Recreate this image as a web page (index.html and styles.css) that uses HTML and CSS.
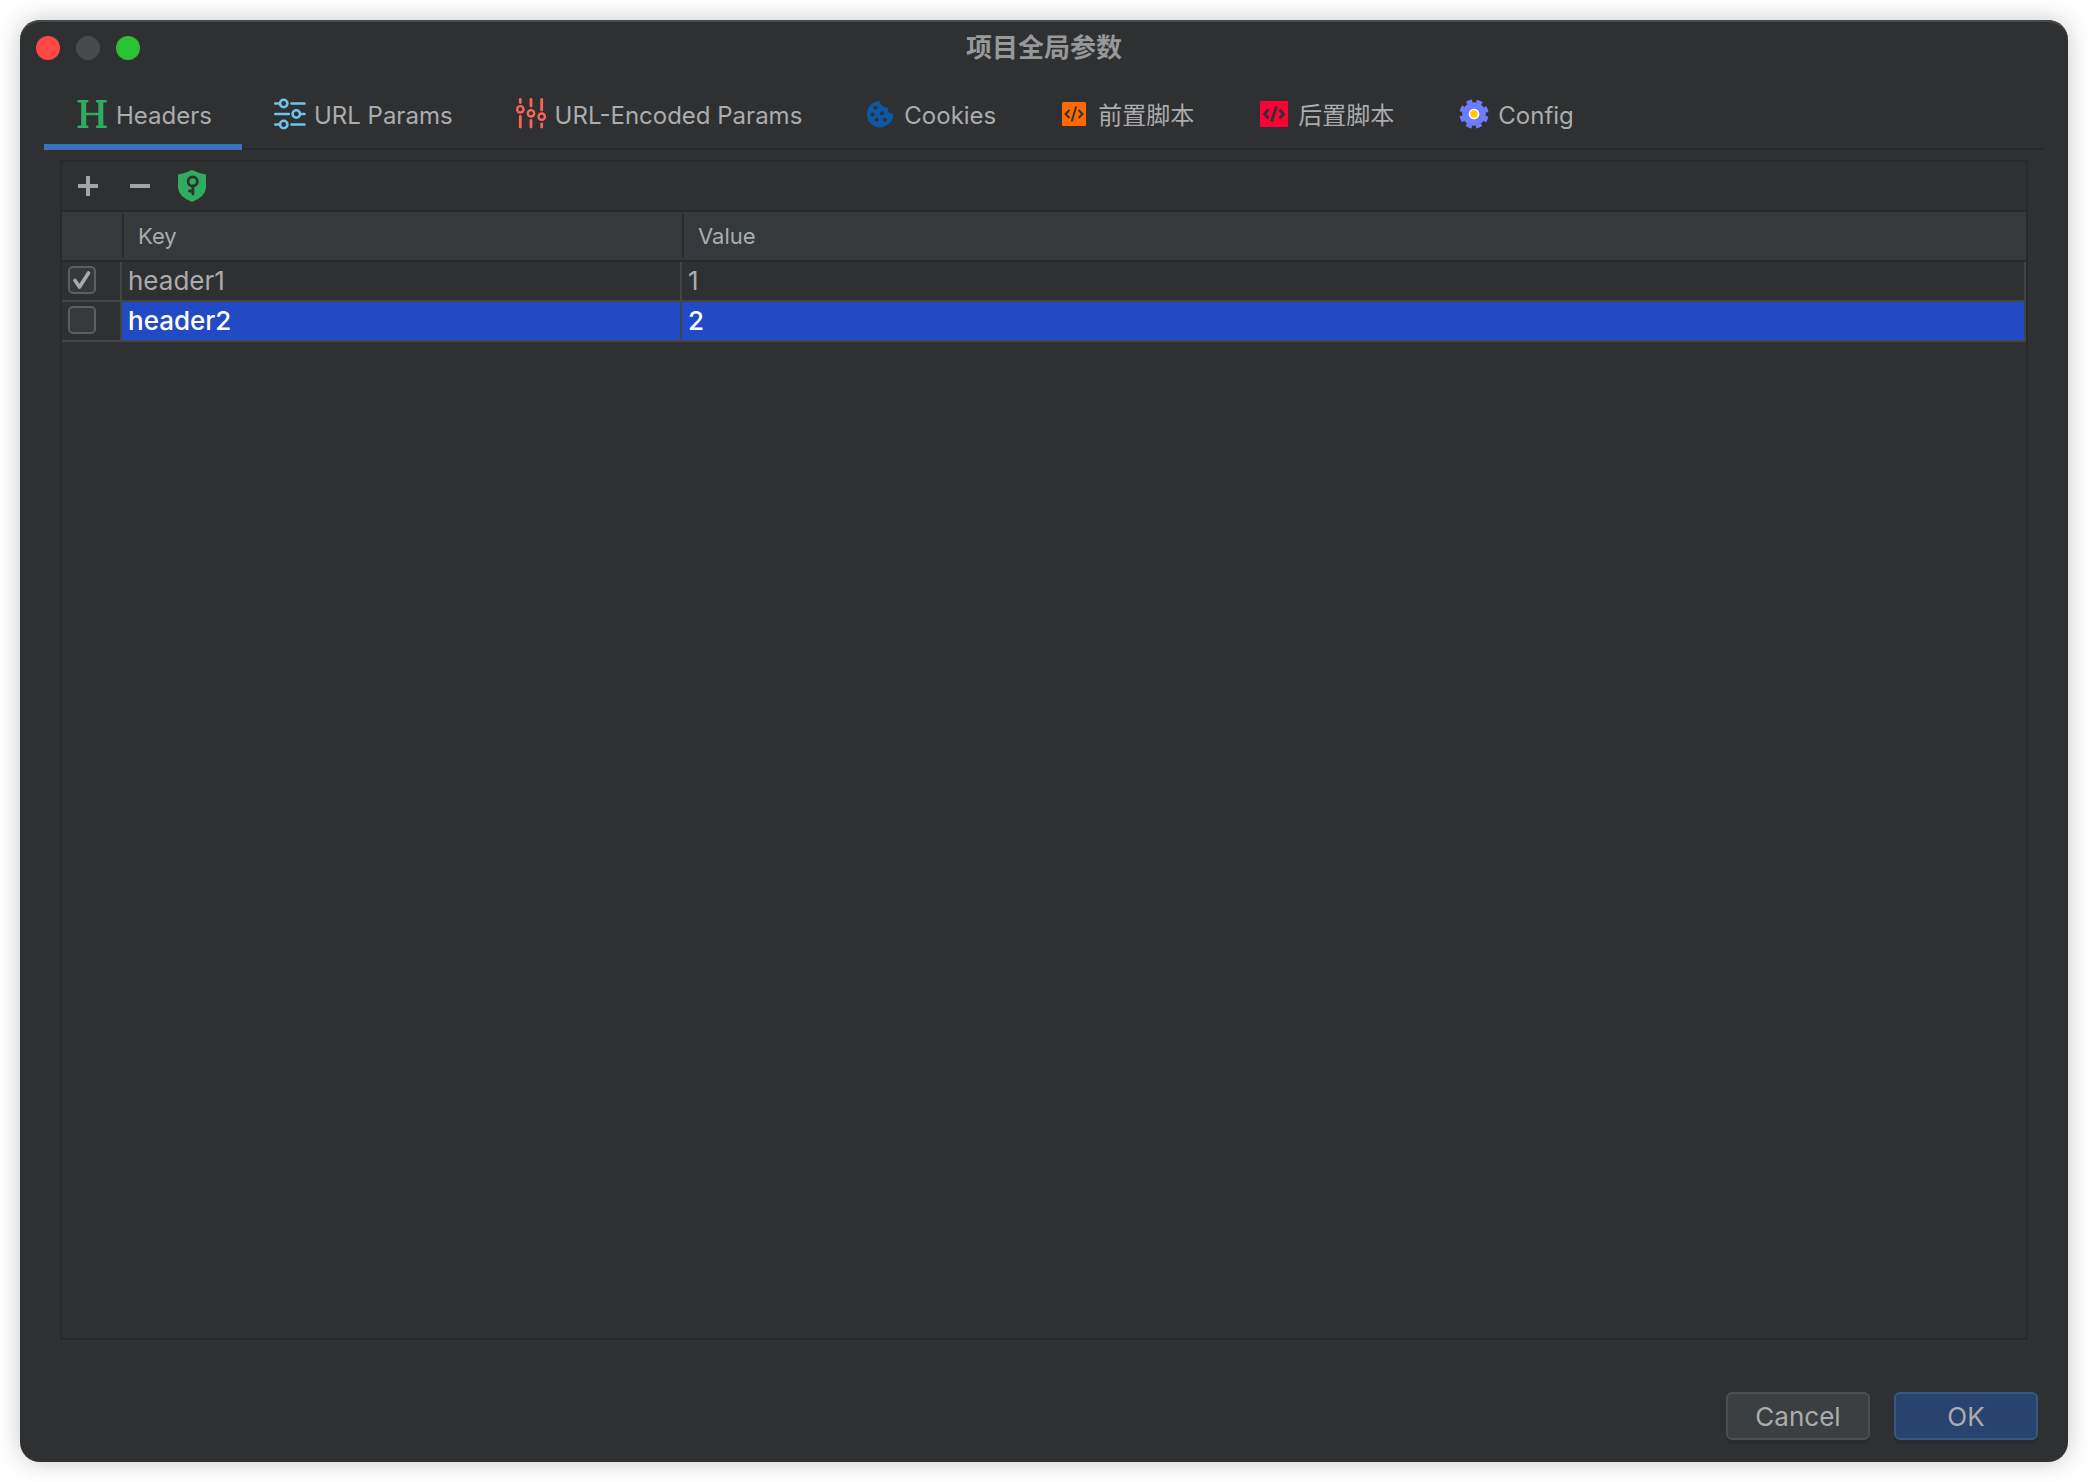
FILE: index.html
```html
<!DOCTYPE html>
<html lang="zh">
<head>
  <meta charset="UTF-8" />
  <meta name="viewport" content="width=device-width, initial-scale=1.0"/>
  <title>项目全局参数</title>
  <link rel="stylesheet" href="styles.css">
</head>
<body>

  <main class="window">
    <header class="titlebar">
      <div class="lights">
        <button type="button" class="light close" aria-label="Close"></button>
        <button type="button" class="light minimize" aria-label="Minimize" disabled></button>
        <button type="button" class="light zoom" aria-label="Zoom"></button>
      </div>
      <h1>项目全局参数</h1>
    </header>

    <nav class="tabs" role="tablist">
      <button type="button" class="tab active" role="tab" aria-selected="true">
        <svg class="icon" viewBox="0 0 32 32" fill="none" stroke="#2fac5f" stroke-linecap="round">
          <path d="M7.700 3v26M24.800 3v26" stroke-width="5" stroke-linecap="butt"/>
          <path d="M2.500 3.300h8.800M21 3.300h8.800M2.500 28.700h8.800M21 28.700h8.800M8 16h17" stroke-width="2.400"/>
        </svg>
        <span>Headers</span>
      </button>
      <button type="button" class="tab" role="tab">
        <svg class="icon" viewBox="0 0 32 32" fill="none" stroke="#6fc3ea" stroke-width="2.600" stroke-linecap="round">
          <path d="M1.300 5.500h4M17.500 5.500h13M1.300 16h13.500M27.500 16h3M1.300 26.500h4M17.500 26.500h13"/>
          <circle cx="9.700" cy="5.500" r="3.700"/>
          <circle cx="22.300" cy="16" r="3.700"/>
          <circle cx="9.700" cy="26.500" r="3.700"/>
        </svg>
        <span>URL Params</span>
      </button>
      <button type="button" class="tab" role="tab">
        <svg class="icon" viewBox="0 0 32 32" fill="none" stroke="#f9655b" stroke-width="2.800" stroke-linecap="round">
          <path d="M5.300 1.500v3M5.300 18.500v10.500M16 1.500v6.500M16 22.500v6.500M26.700 1.500v10.500M26.700 26v3"/>
          <circle cx="5.300" cy="11.300" r="3.200" stroke-width="2.400"/>
          <circle cx="16" cy="15.300" r="3.200" stroke-width="2.400"/>
          <circle cx="26.700" cy="18.700" r="3.200" stroke-width="2.400"/>
        </svg>
        <span>URL-Encoded Params</span>
      </button>
      <button type="button" class="tab" role="tab">
        <svg class="icon" viewBox="0 0 32 32">
          <path d="M16 3A13.200 13.200 0 1 0 29.200 15.500Q26.500 16 24.500 14Q23.500 12 24 9.500Q21.500 10 19 8.500Q16 6.500 16 3z" fill="#0e57a6"/>
          <g fill="#2f3032">
            <circle cx="11.500" cy="9.700" r="2"/>
            <circle cx="8.500" cy="16.500" r="2"/>
            <circle cx="18" cy="15.200" r="2"/>
            <circle cx="12.800" cy="21.700" r="2"/>
            <circle cx="21" cy="21.700" r="2"/>
          </g>
        </svg>
        <span>Cookies</span>
      </button>
      <button type="button" class="tab script" role="tab">
        <svg class="icon" viewBox="0 0 32 32">
          <rect x="4" y="4" width="24" height="24" rx="1.500" fill="#ff6a00"/>
          <path d="M11.500 12l-4 4 4 4M20.500 12l4 4-4 4M18.200 8.500l-4.500 15" fill="none" stroke="#2f3032" stroke-width="2"/>
        </svg>
        <span>前置脚本</span>
      </button>
      <button type="button" class="tab script" role="tab">
        <svg class="icon" viewBox="0 0 32 32">
          <rect x="2" y="3" width="28" height="26" rx="1" fill="#ff0036"/>
          <path d="M10.500 11.500l-4 4.500 4 4.500M21.500 11.500l4 4.500-4 4.500M18.500 8.500l-5 15" fill="none" stroke="#2f3032" stroke-width="2.800"/>
        </svg>
        <span>后置脚本</span>
      </button>
      <button type="button" class="tab" role="tab">
        <svg class="icon" viewBox="0 0 32 32">
          <circle cx="16" cy="16" r="11.800" fill="#6f7cff"/>
          <circle cx="16" cy="16" r="13" fill="none" stroke="#6f7cff" stroke-width="3.200" stroke-dasharray="5.800 4.410" stroke-dashoffset="-2.200"/>
          <circle cx="16" cy="16" r="5.300" fill="#fff"/>
          <circle cx="16" cy="16" r="3.800" fill="#ffcb00"/>
        </svg>
        <span>Config</span>
      </button>
    </nav>

    <section class="panel">
      <div class="toolbar">
        <button type="button" class="tool" aria-label="Add">
          <svg class="icon" viewBox="0 0 32 32"><path d="M16 6v20M6 16h20" stroke="#a3a4a6" stroke-width="4"/></svg>
        </button>
        <button type="button" class="tool" aria-label="Remove">
          <svg class="icon" viewBox="0 0 32 32"><path d="M6 16h20" stroke="#a3a4a6" stroke-width="4"/></svg>
        </button>
        <button type="button" class="tool" aria-label="Authorization">
          <svg class="icon" viewBox="0 0 32 32">
            <path d="M16 0Q22 3 30 4.500V18Q29 27 16 32Q3 27 2 18V4.500Q10 3 16 0z" fill="#2fac5f"/>
            <circle cx="16.700" cy="11.500" r="4.600" fill="none" stroke="#2f3032" stroke-width="2.800"/>
            <path d="M16.900 16v8M16.500 21h-3" fill="none" stroke="#2f3032" stroke-width="2.800" stroke-linecap="round"/>
          </svg>
        </button>
      </div>

      <table class="params">
        <thead>
          <tr>
            <th class="check"></th><th class="key"><span>Key</span></th><th><span>Value</span></th>
          </tr>
        </thead>
        <tbody>
          <tr>
            <td><input type="checkbox" aria-label="header1" checked></td><td>header1</td><td>1</td>
          </tr>
          <tr class="selected">
            <td><input type="checkbox" aria-label="header2"></td><td>header2</td><td>2</td>
          </tr>
        </tbody>
      </table>
    </section>

    <footer class="actions">
      <button type="button" class="btn">Cancel</button>
      <button type="button" class="btn primary">OK</button>
    </footer>
  </main>

</body>
</html>
```
FILE: styles.css
```css
* {
  box-sizing: border-box;
}
body {
  margin: 0;
  min-height: 100vh;
  padding: 20px;
  display: flex;
  background: #fff;
  color: #abacad;
  font-family: Inter, "Noto Sans CJK SC", sans-serif;
  font-size: 26px;
}
button {
  font: inherit;
  color: inherit;
  border: none;
  background: none;
  padding: 0;
}
.window {
  flex: 1;
  display: flex;
  flex-direction: column;
  background: #2f3032;
  border-radius: 20px;
  box-shadow: inset 0 2px 0 #464849, 0 0 24px rgba(0, 0, 0, 0.22);
}
.titlebar {
  display: grid;
  grid-template-columns: 1fr auto 1fr;
  align-items: center;
  height: 56px;
  padding: 0 16px;
}
.titlebar h1 {
  margin: 0;
  font-size: 26px;
  line-height: 32px;
  font-weight: 700;
  color: #979899;
}
.lights {
  display: flex;
  gap: 16px;
}
.light {
  width: 24px;
  height: 24px;
  border-radius: 50%;
}
.close {
  background: #ff4845;
}
.minimize {
  background: #48494b;
}
.zoom {
  background: #2ac332;
}
.tabs {
  display: flex;
  height: 74px;
  margin: 0 24px;
  border-bottom: 2px solid #28292b;
}
.tab {
  display: flex;
  align-items: center;
  gap: 8px;
  height: 74px;
  padding: 8px 30px 0 32px;
  font-size: 24px;
  line-height: 32px;
  border-bottom: 6px solid transparent;
}
.tab span {
  padding-top: 4px;
}
.tab.script {
  padding-right: 32px;
}
.tab.active {
  border-bottom-color: #3a72bf;
}
.icon {
  display: block;
  width: 32px;
  height: 32px;
}
.panel {
  flex: 1;
  margin: 10px 40px 0;
  border: 2px solid #28292b;
}
.toolbar {
  display: flex;
  align-items: center;
  gap: 20px;
  height: 50px;
  padding: 0 10px;
  border-bottom: 2px solid #28292b;
}
.params {
  width: 100%;
  table-layout: fixed;
  border-collapse: separate;
  border-spacing: 0;
}
.params th {
  height: 50px;
  padding: 2px 0;
  text-align: left;
  font-size: 22px;
  font-weight: 400;
  line-height: 44px;
  background: #35393c;
  border-bottom: 2px solid #28292b;
}
.params th span {
  display: block;
  padding-left: 14px;
  border-left: 2px solid #28292b;
}
.params .check {
  width: 60px;
}
.params .key {
  width: 560px;
}
.params td {
  height: 40px;
  padding: 0 6px;
  line-height: 38px;
  border-right: 2px solid #434445;
  border-bottom: 2px solid #434445;
}
.selected td + td {
  background: #214ac4;
  color: #fff;
  font-weight: 500;
}
.params input {
  appearance: none;
  display: block;
  width: 28px;
  height: 28px;
  margin: 0 0 2px;
  border: 2px solid #5d5e60;
  border-radius: 5px;
  background: #35393c;
}
.params input:checked {
  background: #35393c url('data:image/svg+xml,<svg xmlns="http://www.w3.org/2000/svg" viewBox="0 0 24 24"><path d="M5 12.500l4.500 6.500L18.500 5" fill="none" stroke="%23a9aaab" stroke-width="3.600" stroke-linecap="round" stroke-linejoin="round"/></svg>');
}
.actions {
  display: flex;
  justify-content: flex-end;
  gap: 24px;
  padding: 52px 30px 22px;
}
.btn {
  width: 144px;
  height: 48px;
  border: 2px solid #4c4e50;
  border-radius: 6px;
  background: #3c3f41;
  box-shadow: 0 4px 0 #2a2b2d;
}
.primary {
  border-color: #365880;
  background: #28436e;
}
```
